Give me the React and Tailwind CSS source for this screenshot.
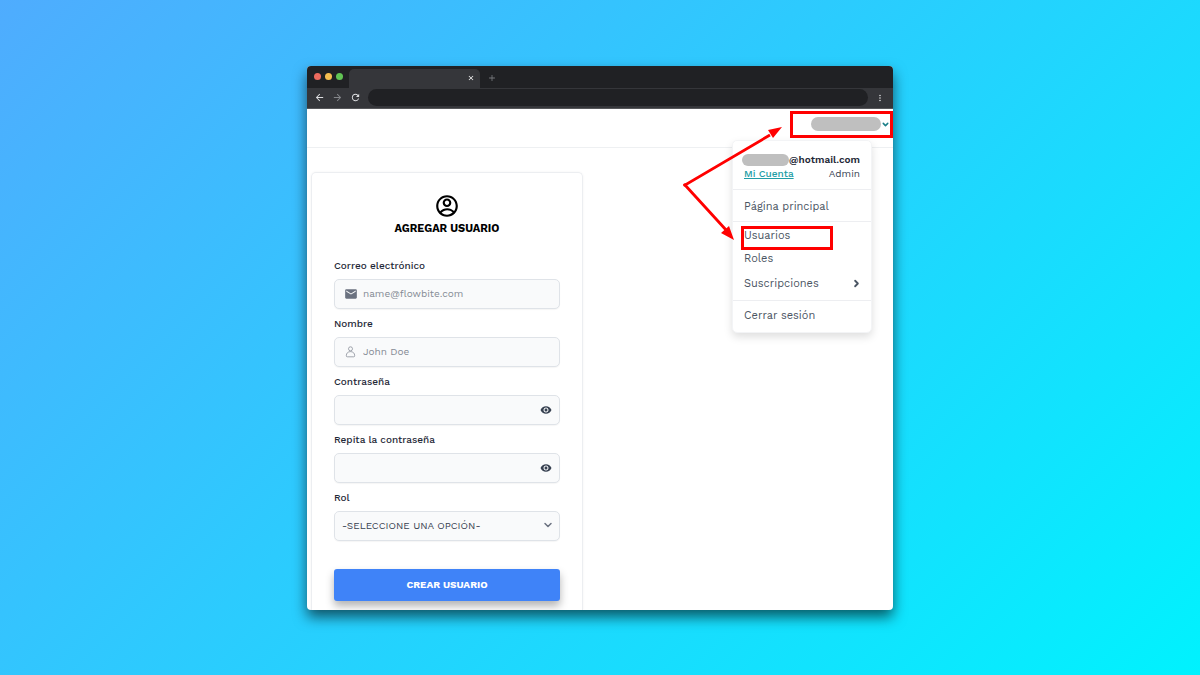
import { RiAccountCircleLine } from "react-icons/ri";
import { MdEmail, MdArrowBack, MdArrowForward, MdRefresh, MdClose, MdAdd, MdMoreVert, MdVisibility } from "react-icons/md";
import { FiChevronDown, FiChevronRight } from "react-icons/fi";

const inputClass =
  "h-[30px] w-full rounded-[5px] border border-[#dfe3e8] bg-[#f9fafb] text-[10px] text-[#374151] shadow-[0_1px_1px_rgba(0,0,0,0.04)] placeholder:text-[#858b95] outline-none";

function Field({ id, label, children }) {
  return (
    <div className="flex flex-col">
      <label htmlFor={id} className="self-start text-[10px] leading-[26px] font-medium text-[#1f2937]">
        {label}
      </label>
      <div className="relative">{children}</div>
    </div>
  );
}

function PasswordField({ id, label }) {
  return (
    <Field id={id} label={label}>
      <input id={id} type="password" className={`${inputClass} pr-8 pl-2`} />
      <button type="button" aria-label="Mostrar contraseña" className="absolute inset-y-0 right-2 flex items-center text-[#374151]">
        <MdVisibility size={12} />
      </button>
    </Field>
  );
}

function PersonIcon() {
  return (
    <svg width="11" height="12" viewBox="0 0 11 12" fill="none" stroke="#8b919b" strokeWidth="0.8" className="absolute top-[9px] left-[11px]" aria-hidden="true">
      <circle cx="5.5" cy="2.8" r="2" />
      <path d="M5.5 5.6C3 5.6 1.3 7.1 1.3 9.8Q1.3 10.8 2.3 10.8H8.7Q9.7 10.8 9.7 9.8C9.7 7.1 8 5.6 5.5 5.6Z" />
    </svg>
  );
}

function BrowserBar() {
  return (
    <div className="bg-[#202124]">
      <div className="flex h-[22px] items-end">
        <div className="flex w-[42px] items-center gap-1 self-center pl-[7px]">
          <span className="size-[7px] rounded-full bg-[#ed6a5e]" />
          <span className="size-[7px] rounded-full bg-[#f5bd4f]" />
          <span className="size-[7px] rounded-full bg-[#61c454]" />
        </div>
        <div className="flex h-[19px] w-[131px] items-center justify-end rounded-t-[5px] bg-[#35363a] pr-[5px]">
          <button type="button" aria-label="Cerrar pestaña" className="text-white"><MdClose size={8} /></button>
        </div>
        <button type="button" aria-label="Nueva pestaña" className="flex h-[19px] items-center pl-[7px] text-[#77797d]"><MdAdd size={10} /></button>
      </div>
      <div className="flex h-[21px] items-center border-b border-[#56575a] bg-[#35363a] pr-2 pl-[7px] text-[#dddee0]">
        <button type="button" aria-label="Atrás"><MdArrowBack size={11} /></button>
        <button type="button" aria-label="Adelante" className="ml-[7px] text-[#85878b]"><MdArrowForward size={11} /></button>
        <button type="button" aria-label="Recargar" className="ml-[7px]"><MdRefresh size={11} /></button>
        <div className="mx-[7px] h-[17px] flex-1 rounded-full bg-[#202124]" />
        <button type="button" aria-label="Más opciones"><MdMoreVert size={10} /></button>
      </div>
    </div>
  );
}

function UserMenu() {
  return (
    <nav className="absolute top-[31px] right-[21px] w-[140px] rounded-[5px] border border-[#f3f4f6] bg-white text-[11px] leading-4 text-[#4b5563] shadow-[0_4px_8px_rgba(0,0,0,0.13)]">
      <div className="border-b border-[#edeef1] px-[11px] pt-3 pb-2 leading-[14px] text-[#374151]">
        <div className="-ml-[2px] flex items-center text-[10px] font-semibold text-[#1f2937]">
          <span className="h-3 flex-1 rounded-full bg-[#bfbfbf]" />
          <span>@hotmail.com</span>
        </div>
        <div className="flex justify-between text-[10px]">
          <a href="#cuenta" className="font-medium text-[#219da5] underline">Mi Cuenta</a>
          <span>Admin</span>
        </div>
      </div>
      <a href="#principal" className="block border-b border-[#edeef1] px-[11px] pt-[9px] pb-[6px]">Página principal</a>
      <div className="flex flex-col border-b border-[#edeef1] pt-[6px] pb-2">
        <div className="relative px-[11px]">
          <a href="#usuarios" className="block">Usuarios</a>
          <span className="pointer-events-none absolute -top-[2px] left-2 h-6 w-[92px] border-3 border-[#ff0000]" />
        </div>
        <a href="#roles" className="mt-[7px] block px-[11px]">Roles</a>
        <a href="#suscripciones" className="mt-[9px] flex items-center justify-between pr-[9px] pl-[11px]">
          Suscripciones <FiChevronRight size={11} strokeWidth={4} />
        </a>
      </div>
      <a href="#salir" className="block px-[11px] pt-[7px] pb-2">Cerrar sesión</a>
    </nav>
  );
}

function Arrows() {
  return (
    <svg className="pointer-events-none absolute top-[15px] right-[107px] z-10" width="104" height="120" viewBox="0 0 104 120" aria-hidden="true">
      <path d="M88 11L3 61L45 107" fill="none" stroke="#ff0000" strokeWidth="2.8" />
      <path d="M100 3L86 6L91 14ZM52 116L39 109L47 102Z" fill="#ff0000" />
      <circle cx="3" cy="61" r="1.8" fill="#ff0000" />
    </svg>
  );
}

export default function App() {
  return (
    <main className="flex min-h-screen items-center justify-center bg-linear-135/srgb from-[#4facfe] to-[#00f2fe] font-['Work_Sans',Inter,sans-serif]">
      <div className="w-full max-w-[586px] overflow-hidden rounded-[4px] bg-white shadow-[0_7px_14px_rgba(0,0,0,0.6)]">
        <BrowserBar />
        <div className="relative">
          <header className="flex h-[39px] items-start justify-end border-b border-[#eef0f2] pt-[2px]">
            <button type="button" aria-label="Menú de usuario" className="flex h-[27px] w-[103px] items-center justify-end border-3 border-[#ff0000] text-[#1a7f88]">
              <span className="h-[14px] w-[70px] rounded-full bg-[#bfbfbf]" />
              <FiChevronDown size={9} strokeWidth={4} />
            </button>
          </header>
          <UserMenu />
          <Arrows />
          <form className="mt-6 ml-1 w-[272px] rounded-t-[5px] border border-b-0 border-[#eceef1] px-[22px] pt-[20px] pb-[9px] shadow-[0_0_3px_rgba(0,0,0,0.05)]">
            <div className="flex flex-col items-center pb-[14px] text-black">
              <RiAccountCircleLine size={26} />
              <h1 className="text-[11px] leading-5 font-bold">AGREGAR USUARIO</h1>
            </div>
            <div className="flex flex-col gap-[2px]">
              <Field id="correo" label="Correo electrónico">
                <MdEmail size={14} className="absolute top-2 left-[10px] text-[#6b7280]" />
                <input id="correo" type="email" placeholder="name@flowbite.com" className={`${inputClass} pr-2 pl-7`} />
              </Field>
              <Field id="nombre" label="Nombre">
                <PersonIcon />
                <input id="nombre" type="text" placeholder="John Doe" className={`${inputClass} pr-2 pl-7`} />
              </Field>
              <PasswordField id="clave" label="Contraseña" />
              <PasswordField id="clave2" label="Repita la contraseña" />
              <Field id="rol" label="Rol">
                <select id="rol" className={`${inputClass} appearance-none px-[7px]`}>
                  <option>-SELECCIONE UNA OPCIÓN-</option>
                </select>
                <FiChevronDown size={12} strokeWidth={3} className="pointer-events-none absolute top-2 right-[6px] text-[#6b7280]" />
              </Field>
            </div>
            <button type="submit" className="mt-7 h-8 w-full rounded-[3px] bg-[#3f83f8] text-[10px] font-bold text-white shadow-[0_5px_9px_rgba(0,0,0,0.3)]">
              CREAR USUARIO
            </button>
          </form>
        </div>
      </div>
    </main>
  );
}
